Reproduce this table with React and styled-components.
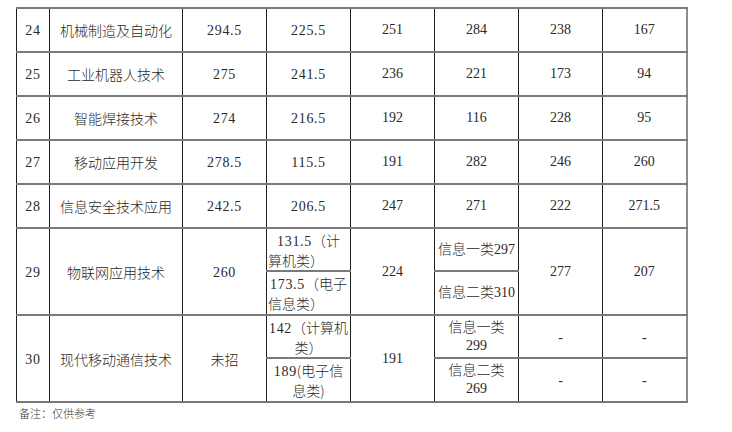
import React from "react";
import styled, { createGlobalStyle } from "styled-components";

const GlobalStyle = createGlobalStyle`
  body {
    margin: 0;
    background: #ffffff;
    color: #2a2a2a;
    font-family: "Noto Sans CJK SC", "Liberation Serif", sans-serif;
  }
`;

const Page = styled.div`
  padding: 7px 0 0 16px;
`;

const Table = styled.table`
  border-collapse: collapse;
  table-layout: fixed;
  width: 670px;
  border-right: 2px solid #8c8c8c;
  border-top: 2px solid #6e6e6e;
`;

const Row = styled.tr`
  height: ${(p) => p.$h || 44}px;
`;

const Cell = styled.td`
  padding: 0;
  border-left: 1px solid #1e1e1e;
  border-right: 1px solid #1e1e1e;
  border-top: 2px solid #7a7a7a;
  border-bottom: 2px solid #7a7a7a;
  text-align: center;
  vertical-align: middle;
  font-size: 14px;
  line-height: 18px;
  font-weight: 300;
  font-family: ${(p) =>
    p.$serif
      ? `"Liberation Serif", "Noto Sans CJK SC", serif`
      : `"Noto Sans CJK SC", sans-serif`};
`;

// digits set in the wide, thin song-style of the original
const Num = styled.span`
  font-family: "Liberation Serif", serif;
  font-size: 14px;
  letter-spacing: 0.7px;
  font-weight: 400;
`;

const Latin = styled.span`
  font-family: "Liberation Serif", serif;
  font-weight: 400;
`;

const Line = styled.div`
  text-align: ${(p) => p.$align || "center"};
  padding-left: ${(p) => p.$indent || 0}px;
  white-space: nowrap;
`;

const Dash = styled.span`
  font-family: "Liberation Serif", serif;
  display: inline-block;
  transform: translateY(1px);
`;

const Note = styled.div`
  margin: 3px 0 0 3px;
  font-size: 11px;
  line-height: 14px;
  font-weight: 300;
  color: #333;
`;

const rows = [
  ["24", "机械制造及自动化", "294.5", "225.5", "251", "284", "238", "167"],
  ["25", "工业机器人技术", "275", "241.5", "236", "221", "173", "94"],
  ["26", "智能焊接技术", "274", "216.5", "192", "116", "228", "95"],
  ["27", "移动应用开发", "278.5", "115.5", "191", "282", "246", "260"],
  ["28", "信息安全技术应用", "242.5", "206.5", "247", "271", "222", "271.5"],
];

const widths = [33, 133, 84, 84, 84, 84, 84, 84];

export default function App() {
  return (
    <Page>
      <GlobalStyle />
      <Table>
        <colgroup>
          {widths.map((w, i) => (
            <col key={i} style={{ width: w }} />
          ))}
        </colgroup>
        <tbody>
          {rows.map((r) => (
            <Row key={r[0]}>
              <Cell>
                <Num>{r[0]}</Num>
              </Cell>
              <Cell>{r[1]}</Cell>
              <Cell>
                <Num>{r[2]}</Num>
              </Cell>
              <Cell>
                <Num>{r[3]}</Num>
              </Cell>
              <Cell $serif>{r[4]}</Cell>
              <Cell $serif>{r[5]}</Cell>
              <Cell $serif>{r[6]}</Cell>
              <Cell $serif>{r[7]}</Cell>
            </Row>
          ))}

          <Row $h={43}>
            <Cell rowSpan={2}>
              <Num>29</Num>
            </Cell>
            <Cell rowSpan={2}>物联网应用技术</Cell>
            <Cell rowSpan={2}>
              <Num>260</Num>
            </Cell>
            <Cell>
              <Line $align="left" $indent={10}>
                <Num>131.5</Num>（计
              </Line>
              <Line $align="left" $indent={1}>
                算机类）
              </Line>
            </Cell>
            <Cell $serif rowSpan={2}>
              224
            </Cell>
            <Cell $serif>
              信息一类<Latin>297</Latin>
            </Cell>
            <Cell $serif rowSpan={2}>
              277
            </Cell>
            <Cell $serif rowSpan={2}>
              207
            </Cell>
          </Row>
          <Row $h={44}>
            <Cell>
              <Line $align="left" $indent={3}>
                <Num>173.5</Num>（电子
              </Line>
              <Line $align="left" $indent={1}>
                信息类）
              </Line>
            </Cell>
            <Cell $serif>
              信息二类<Latin>310</Latin>
            </Cell>
          </Row>

          <Row $h={43}>
            <Cell rowSpan={2}>
              <Num>30</Num>
            </Cell>
            <Cell rowSpan={2}>现代移动通信技术</Cell>
            <Cell rowSpan={2}>未招</Cell>
            <Cell>
              <Line>
                <Num>142</Num>（计算机
              </Line>
              <Line>类）</Line>
            </Cell>
            <Cell $serif rowSpan={2}>
              191
            </Cell>
            <Cell $serif>
              <Line>信息一类</Line>
              <Line>
                <Latin>299</Latin>
              </Line>
            </Cell>
            <Cell $serif>
              <Dash>-</Dash>
            </Cell>
            <Cell $serif>
              <Dash>-</Dash>
            </Cell>
          </Row>
          <Row $h={44}>
            <Cell>
              <Line>
                <Num>189</Num>(电子信
              </Line>
              <Line>息类)</Line>
            </Cell>
            <Cell $serif>
              <Line>信息二类</Line>
              <Line>
                <Latin>269</Latin>
              </Line>
            </Cell>
            <Cell $serif>
              <Dash>-</Dash>
            </Cell>
            <Cell $serif>
              <Dash>-</Dash>
            </Cell>
          </Row>
        </tbody>
      </Table>
      <Note>备注：仅供参考</Note>
    </Page>
  );
}
